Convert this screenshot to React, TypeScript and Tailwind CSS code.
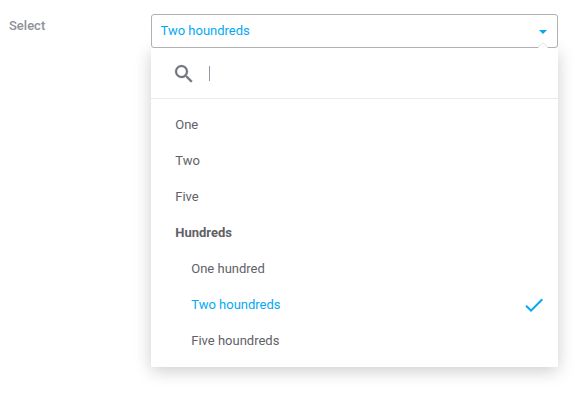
const options = [
  { label: "One" },
  { label: "Two" },
  { label: "Five" },
  { label: "Hundreds", group: true },
  { label: "One hundred", nested: true },
  { label: "Two houndreds", nested: true, selected: true },
  { label: "Five houndreds", nested: true },
];

export default function App() {
  return (
    <div className="flex h-[409px] w-[580px] items-start overflow-hidden bg-white pt-[14px] pl-[9px] font-['Roboto',sans-serif] text-[13px] leading-5 text-[#5f6166]">
      <label className="mt-[2px] w-[142px] font-medium text-[#8e9197]">Select</label>
      <div className="w-[407px]">
        <button className="relative flex h-[34px] w-full items-center justify-between rounded-[3px] border border-[#b0b1b3] bg-white pr-[10px] pl-[8.5px] text-[#03a9f4]">
          <span>Two houndreds</span>
          <svg className="mt-[2px]" width="8" height="4" viewBox="0 0 8 4" fill="currentColor">
            <path d="M0 0h8L4 4z" />
          </svg>
          <svg className="absolute right-[9px] -bottom-[1px]" width="10" height="6" viewBox="0 0 10 6" fill="white">
            <path d="M0 6L5 0.5 10 6z" />
            <path d="M0 5.5L5 0.7 10 5.5" fill="none" stroke="#e2e2e2" strokeWidth="1" />
          </svg>
        </button>
        <div className="h-[319px] bg-white shadow-[0_4px_16px_rgba(0,0,0,0.2)]">
          <div className="flex h-[51px] items-center border-b border-[#e9e9e9] pl-[21.3px]">
            <svg className="mt-[2px]" width="24" height="24" viewBox="0 0 24 24" fill="#73757d" stroke="#73757d" strokeWidth="0.25">
              <path d="M15.5 14h-.79l-.28-.27A6.47 6.47 0 0 0 16 9.5 6.5 6.5 0 1 0 9.5 16c1.61 0 3.09-.59 4.23-1.57l.27.28v.79l5 4.99L20.49 19l-4.99-5zm-6 0C7.01 14 5 11.99 5 9.5S7.01 5 9.5 5 14 7.01 14 9.5 11.99 14 9.5 14z" />
            </svg>
            <span className="ml-[12.7px] h-[15px] w-px bg-[#9699a5]" />
          </div>
          <ul className="pt-2">
            {options.map((o) => (
              <li key={o.label} className={`flex h-9 items-center justify-between pr-[12.5px] ${o.nested ? "pl-[40.25px]" : "pl-[24.25px]"} ${o.group ? "font-bold" : ""} ${o.selected ? "text-[#03a9f4]" : ""}`}>
                <span>{o.label}</span>
                {o.selected && (
                  <svg width="24" height="24" viewBox="0 0 24 24" fill="currentColor">
                    <path d="M9 16.17L4.83 12l-1.42 1.41L9 19 21 7l-1.41-1.41z" />
                  </svg>
                )}
              </li>
            ))}
          </ul>
        </div>
      </div>
    </div>
  );
}
